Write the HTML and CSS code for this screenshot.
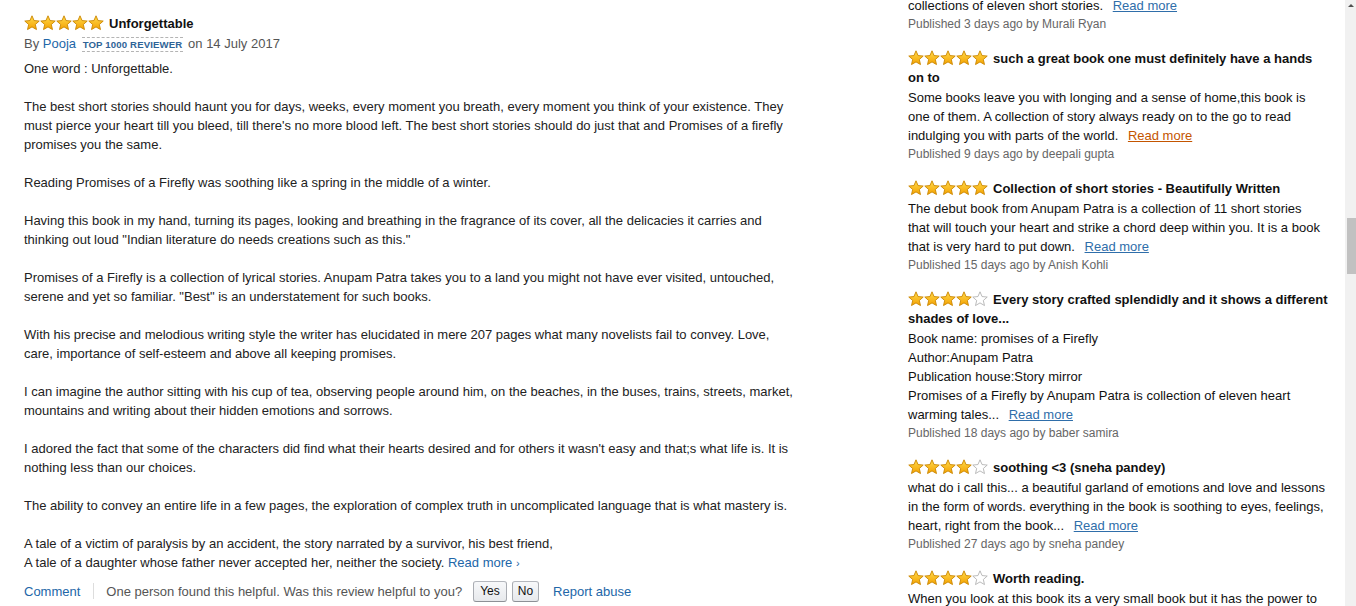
FILE: index.html
```html
<!DOCTYPE html>
<html lang="en">
<head>
<meta charset="utf-8">
<title>Reviews</title>
<link rel="stylesheet" href="styles.css">
</head>
<body>
<svg class="defs" width="0" height="0" aria-hidden="true">
  <defs>
    <linearGradient id="starGrad" x1="0" y1="0" x2="0" y2="1">
      <stop offset="0" stop-color="#ffdb4d"/>
      <stop offset="1" stop-color="#f4a100"/>
    </linearGradient>
    <symbol id="sf" viewBox="0 0 16 16">
      <polygon points="8,0.8 10.06,5.57 15.23,6.05 11.33,9.48 12.47,14.55 8,11.9 3.53,14.55 4.67,9.48 0.77,6.05 5.94,5.57" fill="url(#starGrad)" stroke="#c98600" stroke-width="0.9" stroke-linejoin="round"/>
    </symbol>
    <symbol id="se" viewBox="0 0 16 16">
      <polygon points="8,0.8 10.06,5.57 15.23,6.05 11.33,9.48 12.47,14.55 8,11.9 3.53,14.55 4.67,9.48 0.77,6.05 5.94,5.57" fill="#fff" stroke="#a9a9a9" stroke-width="0.8" stroke-linejoin="round"/>
    </symbol>
  </defs>
</svg>
<div class="page">
  <div class="content">
    <main class="main">
      <div class="review-title">
        <svg class="stars" width="80" height="16" viewBox="0 0 80 16"><use href="#sf" x="0" width="16" height="16"/><use href="#sf" x="16" width="16" height="16"/><use href="#sf" x="32" width="16" height="16"/><use href="#sf" x="48" width="16" height="16"/><use href="#sf" x="64" width="16" height="16"/></svg><span>Unforgettable</span>
      </div>
      <div class="byline">By <a class="link" href="#">Pooja</a> <span class="badge">TOP 1000 REVIEWER</span> on 14 July 2017</div>
      <div class="review-body">
        <p>One word : Unforgettable.</p>
        <p>The best short stories should haunt you for days, weeks, every moment you breath, every moment you think of your existence. They must pierce your heart till you bleed, till there's no more blood left. The best short stories should do just that and Promises of a firefly promises you the same.</p>
        <p>Reading Promises of a Firefly was soothing like a spring in the middle of a winter.</p>
        <p>Having this book in my hand, turning its pages, looking and breathing in the fragrance of its cover, all the delicacies it carries and thinking out loud "Indian literature do needs creations such as this."</p>
        <p>Promises of a Firefly is a collection of lyrical stories. Anupam Patra takes you to a land you might not have ever visited, untouched, serene and yet so familiar. "Best" is an understatement for such books.</p>
        <p>With his precise and melodious writing style the writer has elucidated in mere 207 pages what many novelists fail to convey. Love, care, importance of self-esteem and above all keeping promises.</p>
        <p>I can imagine the author sitting with his cup of tea, observing people around him, on the beaches, in the buses, trains, streets, market, mountains and writing about their hidden emotions and sorrows.</p>
        <p>I adored the fact that some of the characters did find what their hearts desired and for others it wasn't easy and that;s what life is. It is nothing less than our choices.</p>
        <p>The ability to convey an entire life in a few pages, the exploration of complex truth in uncomplicated language that is what mastery is.</p>
        <p class="last">A tale of a victim of paralysis by an accident, the story narrated by a survivor, his best friend,<br>A tale of a daughter whose father never accepted her, neither the society. <a class="link" href="#">Read more <span class="chev">›</span></a></p>
      </div>
      <div class="helpful">
        <a class="link" href="#">Comment</a>
        <span class="sep"></span>
        <span class="helpful-text">One person found this helpful. Was this review helpful to you?</span>
        <button class="btn btn-yes">Yes</button>
        <button class="btn btn-no">No</button>
        <a class="link report" href="#">Report abuse</a>
      </div>
    </main>

    <aside class="side">
      <div class="mini">
        <div class="mini-body">collections of eleven short stories. <a class="more" href="#">Read more</a></div>
        <div class="pub">Published 3 days ago by Murali Ryan</div>
      </div>
      <div class="mini">
        <div class="mini-title"><svg class="stars" width="80" height="16" viewBox="0 0 80 16"><use href="#sf" x="0" width="16" height="16"/><use href="#sf" x="16" width="16" height="16"/><use href="#sf" x="32" width="16" height="16"/><use href="#sf" x="48" width="16" height="16"/><use href="#sf" x="64" width="16" height="16"/></svg>such a great book one must definitely have a hands on to</div>
        <div class="mini-body">Some books leave you with longing and a sense of home,this book is one of them. A collection of story always ready on to the go to read indulging you with parts of the world. <a class="more hover" href="#">Read more</a></div>
        <div class="pub">Published 9 days ago by deepali gupta</div>
      </div>
      <div class="mini">
        <div class="mini-title"><svg class="stars" width="80" height="16" viewBox="0 0 80 16"><use href="#sf" x="0" width="16" height="16"/><use href="#sf" x="16" width="16" height="16"/><use href="#sf" x="32" width="16" height="16"/><use href="#sf" x="48" width="16" height="16"/><use href="#sf" x="64" width="16" height="16"/></svg>Collection of short stories - Beautifully Written</div>
        <div class="mini-body">The debut book from Anupam Patra is a collection of 11 short stories that will touch your heart and strike a chord deep within you. It is a book that is very hard to put down. <a class="more" href="#">Read more</a></div>
        <div class="pub">Published 15 days ago by Anish Kohli</div>
      </div>
      <div class="mini">
        <div class="mini-title"><svg class="stars" width="80" height="16" viewBox="0 0 80 16"><use href="#sf" x="0" width="16" height="16"/><use href="#sf" x="16" width="16" height="16"/><use href="#sf" x="32" width="16" height="16"/><use href="#sf" x="48" width="16" height="16"/><use href="#se" x="64" width="16" height="16"/></svg>Every story crafted splendidly and it shows a different shades of love...</div>
        <div class="mini-body">Book name: promises of a Firefly<br>Author:Anupam Patra<br>Publication house:Story mirror<br>Promises of a Firefly by Anupam Patra is collection of eleven heart warming tales... <a class="more" href="#">Read more</a></div>
        <div class="pub">Published 18 days ago by baber samira</div>
      </div>
      <div class="mini">
        <div class="mini-title"><svg class="stars" width="80" height="16" viewBox="0 0 80 16"><use href="#sf" x="0" width="16" height="16"/><use href="#sf" x="16" width="16" height="16"/><use href="#sf" x="32" width="16" height="16"/><use href="#sf" x="48" width="16" height="16"/><use href="#se" x="64" width="16" height="16"/></svg>soothing &lt;3 (sneha pandey)</div>
        <div class="mini-body">what do i call this... a beautiful garland of emotions and love and lessons in the form of words. everything in the book is soothing to eyes, feelings, heart, right from the book... <a class="more" href="#">Read more</a></div>
        <div class="pub">Published 27 days ago by sneha pandey</div>
      </div>
      <div class="mini">
        <div class="mini-title"><svg class="stars" width="80" height="16" viewBox="0 0 80 16"><use href="#sf" x="0" width="16" height="16"/><use href="#sf" x="16" width="16" height="16"/><use href="#sf" x="32" width="16" height="16"/><use href="#sf" x="48" width="16" height="16"/><use href="#se" x="64" width="16" height="16"/></svg>Worth reading.</div>
        <div class="mini-body">When you look at this book its a very small book but it has the power to touch your heart in ways you never imagined... <a class="more" href="#">Read more</a></div>
        <div class="pub">Published 1 month ago by a reader</div>
      </div>
    </aside>
  </div>
  <div class="scrollbar">
    <div class="arrow"></div>
    <div class="thumb"></div>
  </div>
</div>
</body>
</html>
```

FILE: styles.css
```css
html, body {
  margin: 0;
  padding: 0;
  height: 606px;
  overflow: hidden;
  background: #fff;
}

body {
  font-family: "Liberation Sans", Arial, sans-serif;
  font-size: 13px;
  line-height: 19px;
  color: #222;
}

.defs {
  display: block;
  width: 0;
  height: 0;
  overflow: hidden;
}

.page {
  display: flex;
  height: 606px;
}

.content {
  flex: 1;
  display: flex;
  align-items: flex-start;
  padding-left: 24px;
  overflow: hidden;
}

.link {
  color: #2266a8;
  text-decoration: none;
}

/* ---------- main review ---------- */
.main {
  width: 775px;
  flex: none;
  padding-top: 13.5px;
}

.stars {
  display: inline-block;
  vertical-align: -3px;
  margin-right: 5px;
}

.review-title {
  font-weight: bold;
  color: #111;
  line-height: 19px;
}

.byline {
  margin-top: 1px;
  color: #555;
}

.badge {
  display: inline-block;
  font-size: 9.6px;
  font-weight: bold;
  line-height: 13px;
  letter-spacing: 0.15px;
  color: #2f6497;
  border-top: 1px dashed #b4b4b4;
  border-bottom: 1px dashed #b4b4b4;
  padding: 0 1px;
  margin: 0 1px 0 2px;
}

.review-body {
  margin-top: 6px;
}

.review-body p {
  margin: 0 0 19px;
}

.review-body p.last {
  margin-bottom: 0;
}

.chev {
  font-size: 11px;
}

.helpful {
  display: flex;
  align-items: center;
  height: 22px;
  margin-top: 7.5px;
  white-space: nowrap;
}

.sep {
  width: 1px;
  height: 16px;
  background: #ddd;
  margin: 0 12px 0 13px;
}

.helpful-text {
  color: #555;
}

.btn {
  font-family: "Liberation Sans", Arial, sans-serif;
  font-size: 12px;
  color: #111;
  height: 21px;
  padding: 0 6px;
  border: 1px solid #adb1b8;
  border-color: #b4b7bd #a9acb2 #8d9096;
  border-radius: 3px;
  background: linear-gradient(#f7f8fa, #e7e9ec);
  line-height: 19px;
}

.btn-yes {
  margin-left: 11px;
}

.btn-no {
  margin-left: 5px;
  padding: 0 5px;
}

.report {
  margin-left: 14px;
}

/* ---------- side list ---------- */
.side {
  width: 421px;
  flex: none;
  margin-left: 109px;
  margin-top: -4.5px;
  color: #111;
}

.mini {
  margin-bottom: 15px;
}

.mini-title {
  font-weight: bold;
  color: #111;
  line-height: 19px;
  margin-bottom: 1px;
}

.mini-body {
  line-height: 19px;
  margin-right: 3.5px;
}

.more {
  color: #2f6eaa;
  text-decoration: underline;
  margin-left: 6px;
}

.more.hover {
  color: #c45500;
}

.pub {
  font-size: 12px;
  line-height: 19px;
  color: #666;
}

/* ---------- scrollbar ---------- */
.scrollbar {
  width: 11px;
  flex: none;
  height: 606px;
  background: #f1f1f1;
}

.arrow {
  width: 0;
  height: 0;
  border-left: 3px solid transparent;
  border-right: 3px solid transparent;
  border-bottom: 3px solid #505050;
  margin: 4px 0 0 3px;
}

.thumb {
  width: 9px;
  height: 56px;
  margin: 211px 0 0 2px;
  background: #c1c1c1;
}
```
